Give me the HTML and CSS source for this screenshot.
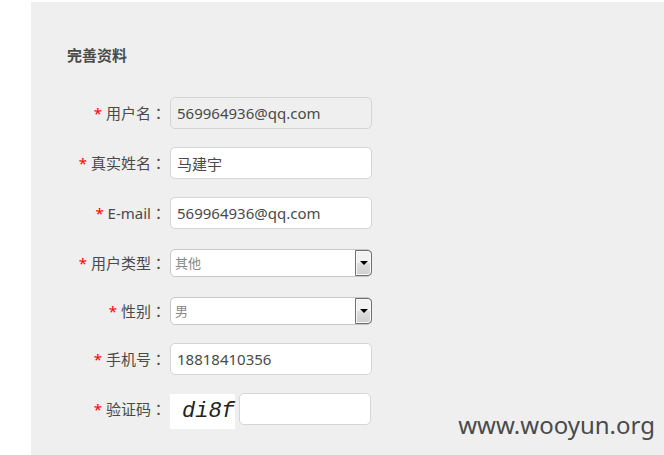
FILE: index.html
```html
<!DOCTYPE html>
<html lang="zh-CN">
<head>
<meta charset="utf-8">
<title>完善资料</title>
<link rel="stylesheet" href="styles.css">
</head>
<body>
<main class="panel">
  <h1 class="title">完善资料</h1>
  <form class="form">
    <div class="row">
      <label class="label" for="username"><span class="required">*</span> 用户名<span class="colon" lang="zh-TW">：</span></label>
      <input class="field readonly" id="username" type="text" value="569964936@qq.com" readonly>
    </div>
    <div class="row">
      <label class="label" for="realname"><span class="required">*</span> 真实姓名<span class="colon" lang="zh-TW">：</span></label>
      <input class="field" id="realname" type="text" value="马建宇">
    </div>
    <div class="row">
      <label class="label" for="email"><span class="required">*</span> E-mail<span class="colon" lang="zh-TW">：</span></label>
      <input class="field" id="email" type="text" value="569964936@qq.com">
    </div>
    <div class="row row-select">
      <label class="label" for="usertype"><span class="required">*</span> 用户类型<span class="colon" lang="zh-TW">：</span></label>
      <div class="select-box">
        <select class="select" id="usertype"><option>其他</option></select>
        <span class="arrow"><svg width="8" height="4" viewBox="0 0 8 4"><path d="M0 0h8L4 4z"/></svg></span>
      </div>
    </div>
    <div class="row row-select">
      <label class="label" for="gender"><span class="required">*</span> 性别<span class="colon" lang="zh-TW">：</span></label>
      <div class="select-box">
        <select class="select" id="gender"><option>男</option></select>
        <span class="arrow"><svg width="8" height="4" viewBox="0 0 8 4"><path d="M0 0h8L4 4z"/></svg></span>
      </div>
    </div>
    <div class="row">
      <label class="label" for="phone"><span class="required">*</span> 手机号<span class="colon" lang="zh-TW">：</span></label>
      <input class="field" id="phone" type="text" value="18818410356">
    </div>
    <div class="row">
      <label class="label" for="captcha"><span class="required">*</span> 验证码<span class="colon" lang="zh-TW">：</span></label>
      <div class="captcha-group">
        <span class="captcha">di8f</span>
        <input class="field field-captcha" id="captcha" type="text">
      </div>
    </div>
  </form>
  <span class="watermark">www.wooyun.org</span>
</main>
</body>
</html>
```

FILE: styles.css
```css
* {
  box-sizing: border-box;
}

body {
  margin: 0;
  background: #fff;
  color: #4a4a4a;
  font: 15px/20px "Noto Sans", "Noto Sans CJK SC", sans-serif;
}

.panel {
  position: relative;
  min-height: calc(100vh - 2px);
  margin: 2px 0 0 31px;
  padding: 43px 36px 24px;
  background: #efefef;
}

.title {
  margin: 0 0 32px;
  font-size: 15px;
  line-height: 20px;
  font-weight: bold;
}

.form {
  display: flex;
  flex-direction: column;
  gap: 18px;
}

.row {
  display: grid;
  grid-template-columns: 99px minmax(0, 202px);
  column-gap: 4px;
  align-items: center;
  height: 32px;
}

.row-select {
  height: 28px;
  margin-top: 2px;
}

.label {
  text-align: right;
  white-space: nowrap;
}

.required {
  color: #f00;
}

.colon {
  font-family: "Noto Sans CJK TC", sans-serif;
  line-height: 1;
}

.field {
  width: 100%;
  min-width: 0;
  height: 32px;
  padding: 0 6px;
  border: 1px solid #d5d5d5;
  border-radius: 5px;
  background: #fff;
  color: #4a4a4a;
  font: inherit;
}

.readonly {
  background: #efefef;
}

.select-box {
  position: relative;
  height: 28px;
}

.select {
  appearance: none;
  width: 100%;
  height: 28px;
  padding: 0 20px 0 4px;
  border: 1px solid #c8c8c8;
  border-radius: 5px;
  background: #fff;
  color: #888;
  font: 13px/20px "Noto Sans", "Noto Sans CJK SC", sans-serif;
}

.arrow {
  position: absolute;
  top: 1px;
  right: 0;
  bottom: 1px;
  display: flex;
  align-items: center;
  justify-content: center;
  width: 17px;
  border: 1px solid #707070;
  border-radius: 0 4px 4px 0;
  background: linear-gradient(#f2f2f2 0 50%, #dfdfdf 50%, #d0d0d0);
  box-shadow: inset 0 0 0 1px #f8f8f8;
  pointer-events: none;
}

.captcha-group {
  display: flex;
  gap: 4px;
  align-items: flex-start;
  height: 32px;
  padding-right: 1px;
}

.captcha {
  flex: none;
  width: 65px;
  height: 35px;
  margin-top: 1px;
  padding-left: 12px;
  background: #fff;
  color: #222;
  font: italic 22px/35px "Liberation Mono", monospace;
}

.field-captcha {
  flex: 1;
}

.watermark {
  position: absolute;
  right: 9px;
  bottom: 13px;
  font-size: 24px;
  line-height: 34px;
}
```
